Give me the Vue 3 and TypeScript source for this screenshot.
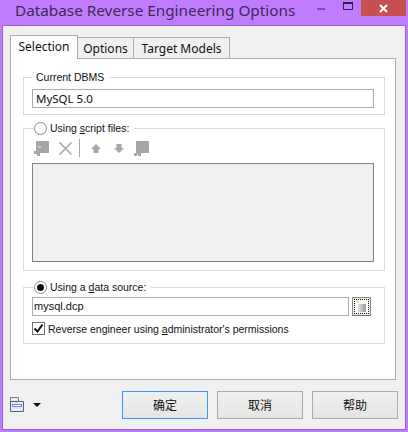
<template>
  <div class="window">
    <div class="titlebar">
      <span class="title">Database Reverse Engineering Options</span>
      <div class="caption">
        <span class="min"></span>
        <span class="max"></span>
        <span class="close">
          <svg width="9" height="9" viewBox="0 0 9 9"><path d="M1 1l7 7M8 1l-7 7" stroke="#fff" stroke-width="2" fill="none" /></svg>
        </span>
      </div>
    </div>
    <div class="client">
      <div class="tabs">
        <div v-for="tab in tabs" :key="tab.label" class="tab" :class="{ active: tab.active }" :style="{ width: tab.width + 'px' }">{{ tab.label }}</div>
      </div>
      <div class="panel">
        <fieldset class="group dbms">
          <legend class="plain">Current DBMS</legend>
          <div class="field large">MySQL 5.0</div>
        </fieldset>

        <fieldset class="group script">
          <legend>
            <span class="radio"></span>
            <span>Using <u>s</u>cript files:</span>
          </legend>
          <div class="toolbar">
            <svg class="first" width="15" height="15" viewBox="0 0 15 15"><path d="M2 0h13v12H6v3H3v-2H0v-3h2z" fill="#a6a6a6" /><path d="M4 6h3" stroke="#eee" /></svg>
            <svg class="cross" width="13" height="13" viewBox="0 0 13 13"><path d="M0.5 0.5l12 12M12.5 0.5l-12 12" stroke="#a3a3a3" stroke-width="1.5" fill="none" /></svg>
            <span class="sep"></span>
            <svg class="up" width="10" height="9" viewBox="0 0 10 9"><path d="M5 0l5 5H7.500v4h-5V5H0z" fill="#a6a6a6" /></svg>
            <svg class="down" width="10" height="9" viewBox="0 0 10 9"><path d="M5 9l5-5H7.500V0h-5v4H0z" fill="#a6a6a6" /></svg>
            <svg class="last" width="15" height="15" viewBox="0 0 15 15"><path d="M2 0h13v12H7v3H4v-2H3v2H0v-3h2z" fill="#a6a6a6" /></svg>
          </div>
          <div class="listbox"></div>
        </fieldset>

        <fieldset class="group source">
          <legend>
            <span class="radio checked"></span>
            <span>Using a <u>d</u>ata source:</span>
          </legend>
          <div class="source-row">
            <div class="field">mysql.dcp</div>
            <button class="browse">
              <svg width="15" height="15" viewBox="0 0 15 15">
                <defs>
                  <linearGradient id="can" x1="0" x2="1" y1="0" y2="0">
                    <stop offset="0" stop-color="#e4e4e4" />
                    <stop offset="1" stop-color="#9a9a9a" />
                  </linearGradient>
                </defs>
                <rect width="15" height="15" fill="#fff" />
                <path d="M0 .5h15M0 14.500h15M.5 0v15M14.500 0v15" stroke="#111" stroke-dasharray="1 1" fill="none" />
                <path d="M4 5h8v8H4z" fill="url(#can)" />
                <path d="M4 3h8v2H4z" fill="#f8f8f8" />
                <path d="M2 2h1V1h1v1h1v1H4v1H3V3H2z" fill="#f2d84a" />
              </svg>
            </button>
          </div>
          <label class="check-row">
            <span class="checkbox">
              <svg width="11" height="11" viewBox="0 0 11 11"><path d="M1.500 5.500l3 3 5-7" stroke="#111" stroke-width="2" fill="none" /></svg>
            </span>
            <span>Reverse engineer using <u>a</u>dministrator's permissions</span>
          </label>
        </fieldset>
      </div>
      <div class="footer">
        <div class="printer">
          <svg width="14" height="15" viewBox="0 0 14 15">
            <path d="M0.500 0.500h8v4h-8z" fill="#dfe3ea" stroke="#7a8296" />
            <path d="M0.500 4.500h13v10H.5z" fill="#e6e9f0" stroke="#56617e" />
            <path d="M2 7h10v3H2z" fill="#6e86e4" />
            <path d="M2.500 2.500h4M3 8.500h8M3 12.500h8" stroke="#fff" />
          </svg>
          <span class="arrow"></span>
        </div>
        <div class="buttons">
          <button class="btn default">确定</button>
          <button class="btn">取消</button>
          <button class="btn">帮助</button>
        </div>
      </div>
    </div>
  </div>
</template>

<script setup lang="ts">
interface TabItem {
  label: string
  width: number
  active?: boolean
}

const tabs: TabItem[] = [
  { label: 'Selection', width: 68, active: true },
  { label: 'Options', width: 56 },
  { label: 'Target Models', width: 96 }
]
</script>

<style>
html,
body {
  margin: 0;
  background: #c07cff;
}
</style>

<style scoped>
.window {
  width: 408px;
  height: 432px;
  box-sizing: border-box;
  background: #c07cff;
  display: flex;
  flex-direction: column;
  padding: 0 2px 2px 2px;
  font-family: "Liberation Sans", "Noto Sans CJK SC", sans-serif;
  font-size: 10.5px;
  color: #111;
  overflow: hidden;
}

.titlebar {
  height: 25px;
  display: flex;
  justify-content: space-between;
  flex-shrink: 0;
}

.title {
  font-family: "Noto Sans", "Open Sans", sans-serif;
  font-size: 15.3px;
  line-height: 21px;
  color: #3a2a55;
  padding-left: 13px;
  white-space: nowrap;
}

.caption {
  display: flex;
  align-items: flex-start;
}

.min {
  width: 8px;
  height: 2px;
  background: #7b4fa8;
  margin: 8px 18px 0 0;
}

.max {
  width: 8px;
  height: 5px;
  border: 1px solid #2b2440;
  border-top-width: 2px;
  margin: 2px 8px 0 0;
}

.close {
  width: 45px;
  height: 16px;
  background: #c75050;
  display: flex;
  align-items: center;
  justify-content: center;
}

.client {
  flex: 1;
  background: #f0f0f0;
  border: 1px solid #9a5fd0;
  padding: 9px 9px 0 7px;
  display: flex;
  flex-direction: column;
  min-height: 0;
}

.tabs {
  display: flex;
  height: 24px;
  align-items: flex-end;
  position: relative;
  z-index: 1;
  margin-bottom: -1px;
}

.tab {
  height: 22px;
  box-sizing: border-box;
  text-align: center;
  line-height: 21px;
  font-family: "Noto Sans", sans-serif;
  font-size: 12px;
  background: #f0f0f0;
  border: 1px solid #acacac;
  border-left: 0;
  white-space: nowrap;
}

.tab.active {
  height: 24px;
  background: #fff;
  border-left: 1px solid #acacac;
  border-bottom: 0;
  line-height: 21px;
}

.panel {
  background: #fff;
  border: 1px solid #acacac;
  height: 322px;
  box-sizing: border-box;
  padding: 11px 10px 0 12px;
  display: flex;
  flex-direction: column;
}

.group {
  margin: 0;
  border: 1px solid #dcdcdc;
  padding: 0 10px 0 8px;
  min-width: 0;
}

.group legend {
  display: flex;
  align-items: center;
  gap: 3px;
  padding: 0 5px 0 0;
  margin-left: 2px;
  height: 15px;
  line-height: 15px;
  white-space: nowrap;
}

.group legend.plain {
  padding: 0 6px 0 4px;
  margin-left: 0;
}

.dbms {
  height: 45px;
  box-sizing: border-box;
}

.script {
  height: 150px;
  box-sizing: border-box;
  margin-top: 6px;
}

.source {
  height: 64px;
  box-sizing: border-box;
  margin-top: 9px;
}

.radio {
  width: 11px;
  height: 11px;
  border: 1px solid #8a8a8a;
  border-radius: 50%;
  background: #fff;
  display: inline-flex;
  align-items: center;
  justify-content: center;
  flex-shrink: 0;
}

.radio.checked::after {
  content: "";
  width: 7px;
  height: 7px;
  border-radius: 50%;
  background: #111;
}

.field {
  height: 19px;
  line-height: 17px;
  box-sizing: border-box;
  border: 1px solid #acacac;
  background: #fff;
  padding-left: 1px;
  flex: 1;
  margin-top: 4px;
  font-size: 11px;
}

.field.large {
  font-family: "Noto Sans", sans-serif;
  font-size: 11.500px;
  padding-left: 3px;
}

.source .field {
  margin-top: 2px;
}

.toolbar {
  display: flex;
  align-items: center;
  height: 18px;
  margin-top: 3px;
}

.first {
  margin-left: 2px;
}

.cross {
  margin-left: 10px;
}

.sep {
  width: 1px;
  height: 18px;
  background: #a8a8a8;
  margin: 0 11px 0 7px;
}

.down {
  margin-left: 13px;
}

.last {
  margin-left: 10px;
}

.listbox {
  height: 99px;
  box-sizing: border-box;
  margin-top: 6px;
  background: #f0f0f0;
  border: 1px solid #82828e;
}

.source-row {
  display: flex;
  gap: 3px;
}

.browse {
  width: 19px;
  height: 19px;
  margin: 2px 3px 0 0;
  padding: 0;
  border: 1px solid #8a8a8a;
  border-bottom-color: #6e6e6e;
  background: #eee;
  display: flex;
  align-items: center;
  justify-content: center;
}

.check-row {
  display: flex;
  align-items: center;
  gap: 3px;
  margin-top: 5px;
  height: 15px;
  white-space: nowrap;
}

.checkbox {
  width: 13px;
  height: 13px;
  box-sizing: border-box;
  border: 1px solid #707070;
  background: #fff;
  display: flex;
  align-items: center;
  justify-content: center;
  flex-shrink: 0;
}

.footer {
  flex: 1;
  display: flex;
  align-items: center;
  justify-content: space-between;
}

.printer {
  display: flex;
  align-items: center;
  gap: 9px;
}

.arrow {
  width: 0;
  height: 0;
  border-left: 4px solid transparent;
  border-right: 4px solid transparent;
  border-top: 4px solid #111;
}

.buttons {
  display: flex;
  gap: 9px;
  margin-right: -2px;
}

.btn {
  width: 86px;
  height: 28px;
  padding: 0;
  border: 1px solid #acacac;
  background: linear-gradient(#f0f0f0, #e5e5e5);
  font-family: "Noto Sans CJK SC", sans-serif;
  font-size: 12px;
  color: #111;
}

.btn.default {
  border-color: #3399ff;
}
</style>
